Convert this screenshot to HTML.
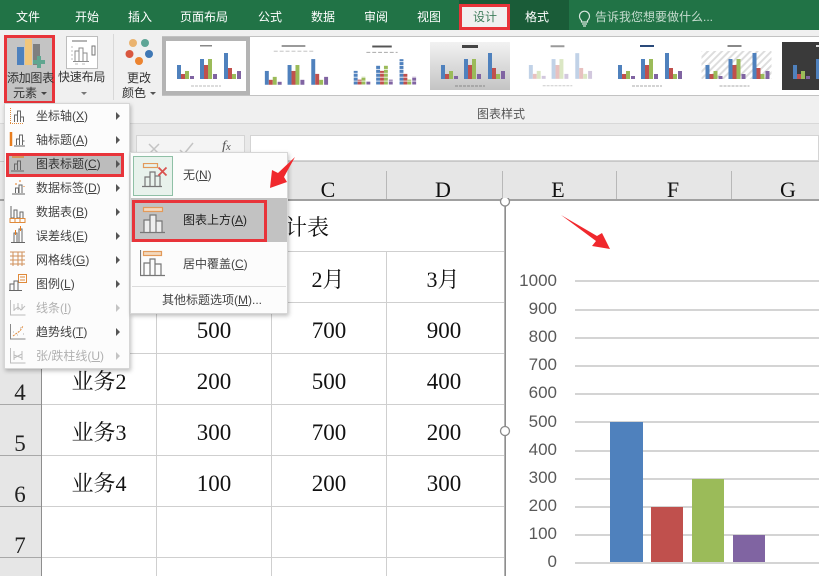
<!DOCTYPE html>
<html><head><meta charset="utf-8">
<style>
html,body{margin:0;padding:0;background:#fff}
#p{position:relative;width:819px;height:576px;overflow:hidden;background:#fff;font-family:"Liberation Sans","Noto Sans CJK SC",sans-serif}
#p div,#p svg{position:absolute}
.t{white-space:nowrap;line-height:16px;height:16px;font-size:12px}
.tab{color:#fff;top:9px;transform:translateX(-50%)}
.m{color:#444;left:36px}
.dis{color:#b1b1b1}
.ar{width:0;height:0;border-left:4px solid #555;border-top:4px solid transparent;border-bottom:4px solid transparent;left:116px}
.s{font-family:"Liberation Serif","Noto Serif CJK SC",serif;font-size:22px;line-height:26px;height:26px;color:#111;white-space:nowrap;transform:translateX(-50%)}
.rn{font-family:"Liberation Serif",serif;font-size:23px;line-height:26px;height:26px;color:#222;left:0;width:40px;text-align:center}
.y{font-size:17px;line-height:20px;height:20px;color:#595959;width:60px;left:497px;text-align:right}
.g{left:575px;width:244px;height:2px;background:#d4d4d4}
.hl{background:#cfcfcf}
u{text-decoration:underline}
</style></head><body><div id="p">

<!-- tab bar -->
<div style="left:0;top:0;width:819px;height:30px;background:#217346"></div>
<div style="left:459px;top:0;width:110px;height:30px;background:#1a5c38"></div>
<div class="t tab" style="left:28px">文件</div>
<div class="t tab" style="left:87px">开始</div>
<div class="t tab" style="left:140px">插入</div>
<div class="t tab" style="left:204px">页面布局</div>
<div class="t tab" style="left:270px">公式</div>
<div class="t tab" style="left:323px">数据</div>
<div class="t tab" style="left:376px">审阅</div>
<div class="t tab" style="left:429px">视图</div>
<div style="left:459px;top:4px;width:45px;height:20px;background:#f0f0f0;border:3px solid #e8343a"></div>
<div class="t tab" style="left:485px;color:#3f7d5c">设计</div>
<div class="t tab" style="left:537px">格式</div>
<svg style="left:577px;top:9px" width="15" height="18" viewBox="0 0 15 18" fill="none" stroke="#d5e6dc" stroke-width="1.2"><path d="M4.5 11.5C3 10 2.500 8.800 2.500 7.200a5 5 0 0 1 10 0c0 1.600-.5 2.800-2 4.300V13h-6zM5 15h5M6 17h3"/></svg>
<div class="t" style="left:595px;top:9px;color:#c6dccf;font-size:12px">告诉我您想要做什么...</div>

<!-- ribbon -->
<div style="left:0;top:30px;width:819px;height:94px;background:#f0f0f0"></div>
<div style="left:0;top:123px;width:819px;height:1px;background:#d8d8d8"></div>
<div style="left:113px;top:34px;width:1px;height:66px;background:#d8d8d8"></div>

<!-- Add chart element -->
<div style="left:4px;top:35px;width:45px;height:63px;background:#c4c4c4;border:3px solid #e8343a"></div>
<svg style="left:15px;top:37px" width="32" height="32" viewBox="0 0 32 32">
<rect x="2" y="10" width="7" height="18" fill="#4e81bd"/>
<rect x="10" y="2" width="7" height="26" fill="#f2c67a"/>
<rect x="18" y="7" width="7" height="21" fill="#7f7f7f"/>
<path d="M22 19h4v4h4v4h-4v4h-4v-4h-4v-4h4z" fill="#60a690"/>
</svg>
<div class="t" style="left:7px;top:70px;color:#333;font-size:12px;letter-spacing:-.3px">添加图表</div>
<div class="t" style="left:13px;top:85px;color:#333">元素</div>
<div style="left:41px;top:92px;width:0;height:0;border-top:3px solid #444;border-left:3px solid transparent;border-right:3px solid transparent"></div>

<!-- Quick layout -->
<svg style="left:66px;top:36px" width="32" height="33" viewBox="0 0 32 33" fill="none">
<rect x=".5" y=".5" width="31" height="32" fill="#fff" stroke="#bdbdbd"/>
<path d="M6 5h15" stroke="#9c9c9c" stroke-width="1.500"/>
<path d="M9 25V15h4v10M13 25V12h4v13M17 25V17h4v8M7 25.500h16" stroke="#8c8c8c"/>
<rect x="26" y="10" width="3" height="9" stroke="#777"/>
<path d="M5 11h2M5 15h2M5 19h2M5 23h2M9 28h3M16 28h3" stroke="#bbb"/>
</svg>
<div class="t" style="left:58px;top:69px;color:#333;letter-spacing:-.2px">快速布局</div>
<div style="left:81px;top:92px;width:0;height:0;border-top:3px solid #777;border-left:3px solid transparent;border-right:3px solid transparent"></div>

<!-- Change colours -->
<svg style="left:122px;top:36px" width="36" height="32">
<circle cx="11" cy="7" r="4" fill="#eab36f"/>
<circle cx="23" cy="7" r="4" fill="#5fa596"/>
<circle cx="7.500" cy="18" r="4" fill="#d9573f"/>
<circle cx="27" cy="18" r="4" fill="#3f78b5"/>
<circle cx="17" cy="25" r="4" fill="#ec8430"/>
</svg>
<div class="t" style="left:127px;top:70px;color:#333">更改</div>
<div class="t" style="left:122px;top:85px;color:#333">颜色</div>
<div style="left:150px;top:92px;width:0;height:0;border-top:3px solid #555;border-left:3px solid transparent;border-right:3px solid transparent"></div>

<!-- gallery -->
<div style="left:162px;top:36px;width:657px;height:60px;background:#fff;border-top:1px solid #c2c2c2;border-bottom:1px solid #c2c2c2;box-sizing:border-box"></div>
<svg width="0" height="0" style="left:0;top:0">
<defs>
<symbol id="bars" viewBox="0 0 80 48" overflow="visible">
<rect x="11" y="23" width="4" height="14" fill="#4f81bd"/><rect x="15" y="32" width="4" height="5" fill="#c0504d"/><rect x="19" y="29" width="4" height="8" fill="#9bbb59"/><rect x="24" y="34" width="4" height="3" fill="#8064a2"/>
<rect x="34" y="17" width="4" height="20" fill="#4f81bd"/><rect x="38" y="23" width="4" height="14" fill="#c0504d"/><rect x="42" y="17" width="4" height="20" fill="#9bbb59"/><rect x="47" y="32" width="4" height="5" fill="#8064a2"/>
<rect x="58" y="11" width="4" height="26" fill="#4f81bd"/><rect x="62" y="26" width="4" height="11" fill="#c0504d"/><rect x="66" y="32" width="4" height="5" fill="#9bbb59"/><rect x="71" y="29" width="4" height="8" fill="#8064a2"/>
</symbol>
<pattern id="hatch" width="5" height="5" patternUnits="userSpaceOnUse" patternTransform="rotate(45)"><rect width="2" height="5" fill="#ddd"/></pattern>
<pattern id="stripe" width="4" height="4" patternUnits="userSpaceOnUse"><rect y="3" width="4" height="1" fill="#fff" opacity=".8"/></pattern>
</defs>
</svg>

<div style="left:162px;top:37px;width:80px;height:50px;border:4px solid #b4b4b4;background:#fff"></div>
<svg style="left:166px;top:42px" width="80" height="48" viewBox="0 0 80 48"><rect x="34" y="3" width="12" height="1.500" fill="#888"/><use href="#bars" width="80" height="48"/><path d="M25 44h30" stroke="#bbb" stroke-dasharray="3 1"/></svg>

<svg style="left:254px;top:42px" width="79" height="48" viewBox="0 0 80 48"><rect x="28" y="3" width="24" height="1.500" fill="#777"/><path d="M20 9h40" stroke="#bbb" stroke-dasharray="4 2"/><use href="#bars" width="80" height="48" y="6"/></svg>

<svg style="left:343px;top:42px" width="78" height="48" viewBox="0 0 80 48"><rect x="30" y="3" width="20" height="2" fill="#555"/><path d="M24 10h32" stroke="#aaa" stroke-dasharray="4 2"/><use href="#bars" width="80" height="48" y="6"/><rect y="12" width="80" height="32" fill="url(#stripe)"/></svg>

<svg style="left:430px;top:42px" width="80" height="48" viewBox="0 0 80 48"><defs><linearGradient id="gg" x1="0" y1="0" x2="0" y2="1"><stop offset="0" stop-color="#f2f2f2"/><stop offset="1" stop-color="#c4c4c4"/></linearGradient></defs><rect width="80" height="48" fill="url(#gg)"/><rect x="32" y="3" width="16" height="3" fill="#444"/><use href="#bars" width="80" height="48"/><path d="M25 44h30" stroke="#888" stroke-dasharray="3 1"/></svg>

<svg style="left:518px;top:42px" width="79" height="48" viewBox="0 0 80 48"><rect x="33" y="3" width="14" height="2" fill="#999"/><use href="#bars" width="80" height="48" opacity=".35"/><path d="M25 44h30" stroke="#ccc" stroke-dasharray="3 1"/></svg>

<svg style="left:607px;top:42px" width="80" height="48" viewBox="0 0 80 48"><rect x="33" y="3" width="14" height="2" fill="#2a4a7a"/><use href="#bars" width="80" height="48"/><path d="M25 44h30" stroke="#aaa" stroke-dasharray="3 1"/></svg>

<svg style="left:694px;top:42px" width="81" height="48" viewBox="0 0 80 48"><rect x="33" y="3" width="14" height="2" fill="#888"/><rect x="7" y="9" width="70" height="28" fill="url(#hatch)"/><use href="#bars" width="80" height="48"/><path d="M25 44h30" stroke="#aaa" stroke-dasharray="3 1"/></svg>

<svg style="left:782px;top:42px" width="37" height="48" viewBox="0 0 37 48"><rect width="80" height="48" fill="#3a3a3a"/><rect x="34" y="3" width="3" height="2" fill="#ddd"/><use href="#bars" width="80" height="48" x="0"/></svg>

<div class="t" style="left:477px;top:106px;color:#555">图表样式</div>

<!-- formula bar -->
<div style="left:0;top:124px;width:819px;height:37px;background:#e9e9e9"></div>
<div style="left:136px;top:135px;width:109px;height:26px;background:#f4f4f4;border:1px solid #d4d4d4;box-sizing:border-box"></div>
<div style="left:250px;top:135px;width:569px;height:26px;background:#fff;border:1px solid #d4d4d4;box-sizing:border-box"></div>
<svg style="left:145px;top:140px" width="95" height="18" fill="none" stroke="#c4c4c4" stroke-width="1.500"><path d="M4 4l10 10M14 4L4 14M35 10l4 4 9-11"/></svg>
<div style="left:222px;top:139px;font-family:'Liberation Serif',serif;font-style:italic;font-size:14px;line-height:16px;color:#555">f<span style="font-size:11px">x</span></div>

<!-- column header -->
<div style="left:0;top:161px;width:819px;height:40px;background:#e6e6e6;border-top:1px solid #c8c8c8;border-bottom:2px solid #a0a0a0;box-sizing:border-box"></div>
<div class="s" style="left:328px;top:177px">C</div>
<div class="s" style="left:443px;top:177px">D</div>
<div class="s" style="left:558px;top:177px">E</div>
<div class="s" style="left:673px;top:177px">F</div>
<div class="s" style="left:788px;top:177px">G</div>
<div style="left:386px;top:171px;width:1px;height:28px;background:#b8b8b8"></div>
<div style="left:502px;top:171px;width:1px;height:28px;background:#b8b8b8"></div>
<div style="left:616px;top:171px;width:1px;height:28px;background:#b8b8b8"></div>
<div style="left:731px;top:171px;width:1px;height:28px;background:#b8b8b8"></div>

<!-- row header -->
<div style="left:0;top:201px;width:41px;height:375px;background:#e6e6e6;border-right:1px solid #8e8e8e;box-sizing:content-box"></div>
<div style="left:0;top:404px;width:41px;height:1px;background:#a8a8a8"></div>
<div style="left:0;top:455px;width:41px;height:1px;background:#a8a8a8"></div>
<div style="left:0;top:506px;width:41px;height:1px;background:#a8a8a8"></div>
<div style="left:0;top:557px;width:41px;height:1px;background:#a8a8a8"></div>
<div class="rn" style="top:380px">4</div>
<div class="rn" style="top:431px">5</div>
<div class="rn" style="top:482px">6</div>
<div class="rn" style="top:533px">7</div>

<!-- grid -->
<div class="hl" style="left:42px;top:251px;width:462px;height:1px"></div>
<div class="hl" style="left:42px;top:302px;width:462px;height:1px"></div>
<div class="hl" style="left:42px;top:353px;width:462px;height:1px"></div>
<div class="hl" style="left:42px;top:404px;width:462px;height:1px"></div>
<div class="hl" style="left:42px;top:455px;width:462px;height:1px"></div>
<div class="hl" style="left:42px;top:506px;width:462px;height:1px"></div>
<div class="hl" style="left:42px;top:557px;width:462px;height:1px"></div>
<div class="hl" style="left:156px;top:252px;width:1px;height:324px"></div>
<div class="hl" style="left:271px;top:252px;width:1px;height:324px"></div>
<div class="hl" style="left:386px;top:252px;width:1px;height:324px"></div>

<!-- cells -->
<div class="s" style="left:307px;top:215px">计表</div>
<div class="s" style="left:328px;top:267px">2月</div>
<div class="s" style="left:443px;top:267px">3月</div>
<div class="s" style="left:214px;top:318px;font-size:23px">500</div>
<div class="s" style="left:329px;top:318px;font-size:23px">700</div>
<div class="s" style="left:444px;top:318px;font-size:23px">900</div>
<div class="s" style="left:99px;top:369px">业务2</div>
<div class="s" style="left:214px;top:369px;font-size:23px">200</div>
<div class="s" style="left:329px;top:369px;font-size:23px">500</div>
<div class="s" style="left:444px;top:369px;font-size:23px">400</div>
<div class="s" style="left:99px;top:420px">业务3</div>
<div class="s" style="left:214px;top:420px;font-size:23px">300</div>
<div class="s" style="left:329px;top:420px;font-size:23px">700</div>
<div class="s" style="left:444px;top:420px;font-size:23px">200</div>
<div class="s" style="left:99px;top:471px">业务4</div>
<div class="s" style="left:214px;top:471px;font-size:23px">100</div>
<div class="s" style="left:329px;top:471px;font-size:23px">200</div>
<div class="s" style="left:444px;top:471px;font-size:23px">300</div>

<!-- chart -->
<div style="left:505px;top:201px;width:314px;height:375px;background:#fff"></div>
<div style="left:504px;top:201px;width:1px;height:375px;background:#b4b4b4"></div>
<div style="left:505px;top:201px;width:1px;height:375px;background:#8e8e8e"></div>
<svg style="left:498px;top:198px" width="14" height="10"><circle cx="7" cy="3.500" r="4.500" fill="#fff" stroke="#8a8a8a" stroke-width="1.300"/></svg>
<svg style="left:498px;top:424px" width="14" height="14"><circle cx="7" cy="7" r="4.500" fill="#fff" stroke="#8a8a8a" stroke-width="1.300"/></svg>
<div class="g" style="top:280px"></div><div class="g" style="top:309px"></div><div class="g" style="top:337px"></div><div class="g" style="top:365px"></div><div class="g" style="top:393px"></div><div class="g" style="top:421px"></div><div class="g" style="top:450px"></div><div class="g" style="top:478px"></div><div class="g" style="top:506px"></div><div class="g" style="top:534px"></div><div class="g" style="top:562px"></div>
<div class="y" style="top:271px">1000</div><div class="y" style="top:299px">900</div><div class="y" style="top:327px">800</div><div class="y" style="top:355px">700</div><div class="y" style="top:383px">600</div><div class="y" style="top:412px">500</div><div class="y" style="top:440px">400</div><div class="y" style="top:468px">300</div><div class="y" style="top:496px">200</div><div class="y" style="top:524px">100</div><div class="y" style="top:552px">0</div>
<div style="left:610px;top:422px;width:33px;height:140px;background:#4f81bd"></div>
<div style="left:651px;top:507px;width:32px;height:55px;background:#c0504d"></div>
<div style="left:692px;top:479px;width:32px;height:83px;background:#9bbb59"></div>
<div style="left:733px;top:535px;width:32px;height:27px;background:#8064a2"></div>

<!-- main dropdown -->
<div style="left:4px;top:103px;width:126px;height:266px;background:#fcfcfc;border:1px solid #d6d6d6;box-sizing:border-box;box-shadow:1px 2px 4px rgba(0,0,0,.25)"></div>
<div style="left:6px;top:153px;width:112px;height:18px;background:#bcbcbc;border:3px solid #e8343a"></div>
<div class="t m" style="top:108px">坐标轴(<u>X</u>)</div>
<div class="t m" style="top:132px">轴标题(<u>A</u>)</div>
<div class="t m" style="top:156px;color:#333">图表标题(<u>C</u>)</div>
<div class="t m" style="top:180px">数据标签(<u>D</u>)</div>
<div class="t m" style="top:204px">数据表(<u>B</u>)</div>
<div class="t m" style="top:228px">误差线(<u>E</u>)</div>
<div class="t m" style="top:252px">网格线(<u>G</u>)</div>
<div class="t m" style="top:276px">图例(<u>L</u>)</div>
<div class="t m dis" style="top:300px">线条(<u>I</u>)</div>
<div class="t m" style="top:324px">趋势线(<u>T</u>)</div>
<div class="t m dis" style="top:348px">张/跌柱线(<u>U</u>)</div>
<div class="ar" style="top:112px"></div><div class="ar" style="top:136px"></div><div class="ar" style="top:160px"></div><div class="ar" style="top:184px"></div><div class="ar" style="top:208px"></div><div class="ar" style="top:232px"></div><div class="ar" style="top:256px"></div><div class="ar" style="top:280px"></div><div class="ar" style="top:304px;border-left-color:#c4c4c4"></div><div class="ar" style="top:328px"></div><div class="ar" style="top:352px;border-left-color:#c4c4c4"></div>

<!-- menu icons -->
<svg style="left:8px;top:106px" width="20" height="264" viewBox="0 0 20 264" fill="none" stroke="#666" stroke-width="1">
<path d="M2.500 2v15M2 17.500h14" stroke="#e08a3a" stroke-dasharray="1 1"/><path d="M6.500 16V9h3v7M9.500 16V5h3v11M12.500 16v-5h3v5"/>
<path d="M3 26v14" stroke="#e87d1e" stroke-width="2.500"/><path d="M6 40h11M8.500 39v-6h3v6M11.500 39V29h3v10M14.500 39v-4h2"/>
<path d="M4 51h12" stroke="#e08a3a" stroke-width="1.500"/><path d="M3 65h13M6.500 64v-6h3v6M9.500 64v-9h3v9"/>
<path d="M4 88h13M7.500 87v-5h3v5M11 87v-8h3v8" /><path d="M8 77v2M12 74v2M16 80v1" stroke="#e87d1e"/>
<path d="M3 100v12h3v-8h3v8h3v-6h3v6" /><path d="M2 112.500h15v4H2zM2 116.500v-4M7 112v5M12 112v5" stroke="#e08a3a"/>
<path d="M6 136v-9h3v9M11 136v-13h3v13M3 136.500h14"/><path d="M7.500 124v5M12.500 120v5" stroke="#e87d1e"/>
<path d="M2 146h15M2 150h15M2 154h15M2 158h15M5 146v14M10 146v14M14 146v14" stroke="#d0905a"/>
<rect x="10.500" y="168.500" width="8" height="8" stroke="#e08a3a"/><path d="M12 171h5M12 174h5" stroke="#e08a3a"/><path d="M2 184v-6h4v6M6 184v-9h4v9M1 184.500h13"/>
<path d="M2.500 194v15h15M6 204l4-3 3 3 4-4M6 198v7M10 197v7M14 198v6" stroke="#bdbdbd"/>
<path d="M2.500 218v15h15" stroke="#888"/><path d="M5 230l4-3 3-2 3-5" stroke="#e08a3a" stroke-dasharray="2 1"/><path d="M5 226h.5M9 229h.5M12 222h.5M15 228h.5" stroke="#666"/>
<path d="M2.500 242v15h15M6 245v9M14 245v9M6 249l8 3M6 252l8-4" stroke="#bdbdbd"/>
</svg>

<!-- submenu -->
<div style="left:130px;top:152px;width:158px;height:162px;background:#fcfcfc;border:1px solid #d6d6d6;box-sizing:border-box;box-shadow:1px 2px 4px rgba(0,0,0,.25)"></div>
<div style="left:133px;top:156px;width:40px;height:40px;background:#e8f2ec;border:1px solid #8fc0a6;box-sizing:border-box"></div>
<div style="left:131px;top:198px;width:156px;height:44px;background:#c2c2c2"></div>
<div style="left:132px;top:200px;width:129px;height:36px;border:3px solid #e8343a"></div>
<div style="left:132px;top:286px;width:154px;height:1px;background:#dcdcdc"></div>
<svg style="left:140px;top:163px" width="32" height="28" fill="none" stroke="#777" stroke-width="1.200"><rect x="3.500" y=".5" width="14" height="4" stroke="#e29a5a"/><path d="M2 23.500h20M5 23V14h5v9M10 23V9h5v14M15 23V13h5v10"/><path d="M18.500 4.500l8 8M26.500 4.500l-8 8" stroke="#d9534f" stroke-width="1.800"/></svg>
<svg style="left:140px;top:206px" width="32" height="30" fill="none" stroke="#777" stroke-width="1.200"><rect x="3.500" y="1.500" width="19" height="4" fill="#f3d9bd" stroke="#e29a5a"/><path d="M0 26.500h25M4 26V14h6v12M10 26V9h6v17M16 26V15h6v11" fill="#eee"/></svg>
<svg style="left:140px;top:249px" width="32" height="30" fill="none" stroke="#777" stroke-width="1.200"><rect x="3.500" y="2.500" width="18" height="4" fill="#f3d9bd" stroke="#e29a5a"/><path d="M0 26.500h25M.5 1v26M4 26V14h6v12M10 26V10h5v16M15 26V15h6v11"/></svg>
<div class="t" style="left:183px;top:167px;color:#444">无(<u>N</u>)</div>
<div class="t" style="left:183px;top:212px;color:#222">图表上方(<u>A</u>)</div>
<div class="t" style="left:183px;top:256px;color:#444">居中覆盖(<u>C</u>)</div>
<div class="t" style="left:162px;top:292px;color:#444">其他标题选项(<u>M</u>)...</div>

<!-- red arrows -->
<svg style="left:0;top:0" width="819" height="576">
<path d="M295 157L284 177L287 182L270 188L272 170L278 173Z" fill="#f0282d"/>
<path d="M561 215L597 236L602 233L610 249L592 246L596 241Z" fill="#f0282d"/>
</svg>
</div></body></html>
